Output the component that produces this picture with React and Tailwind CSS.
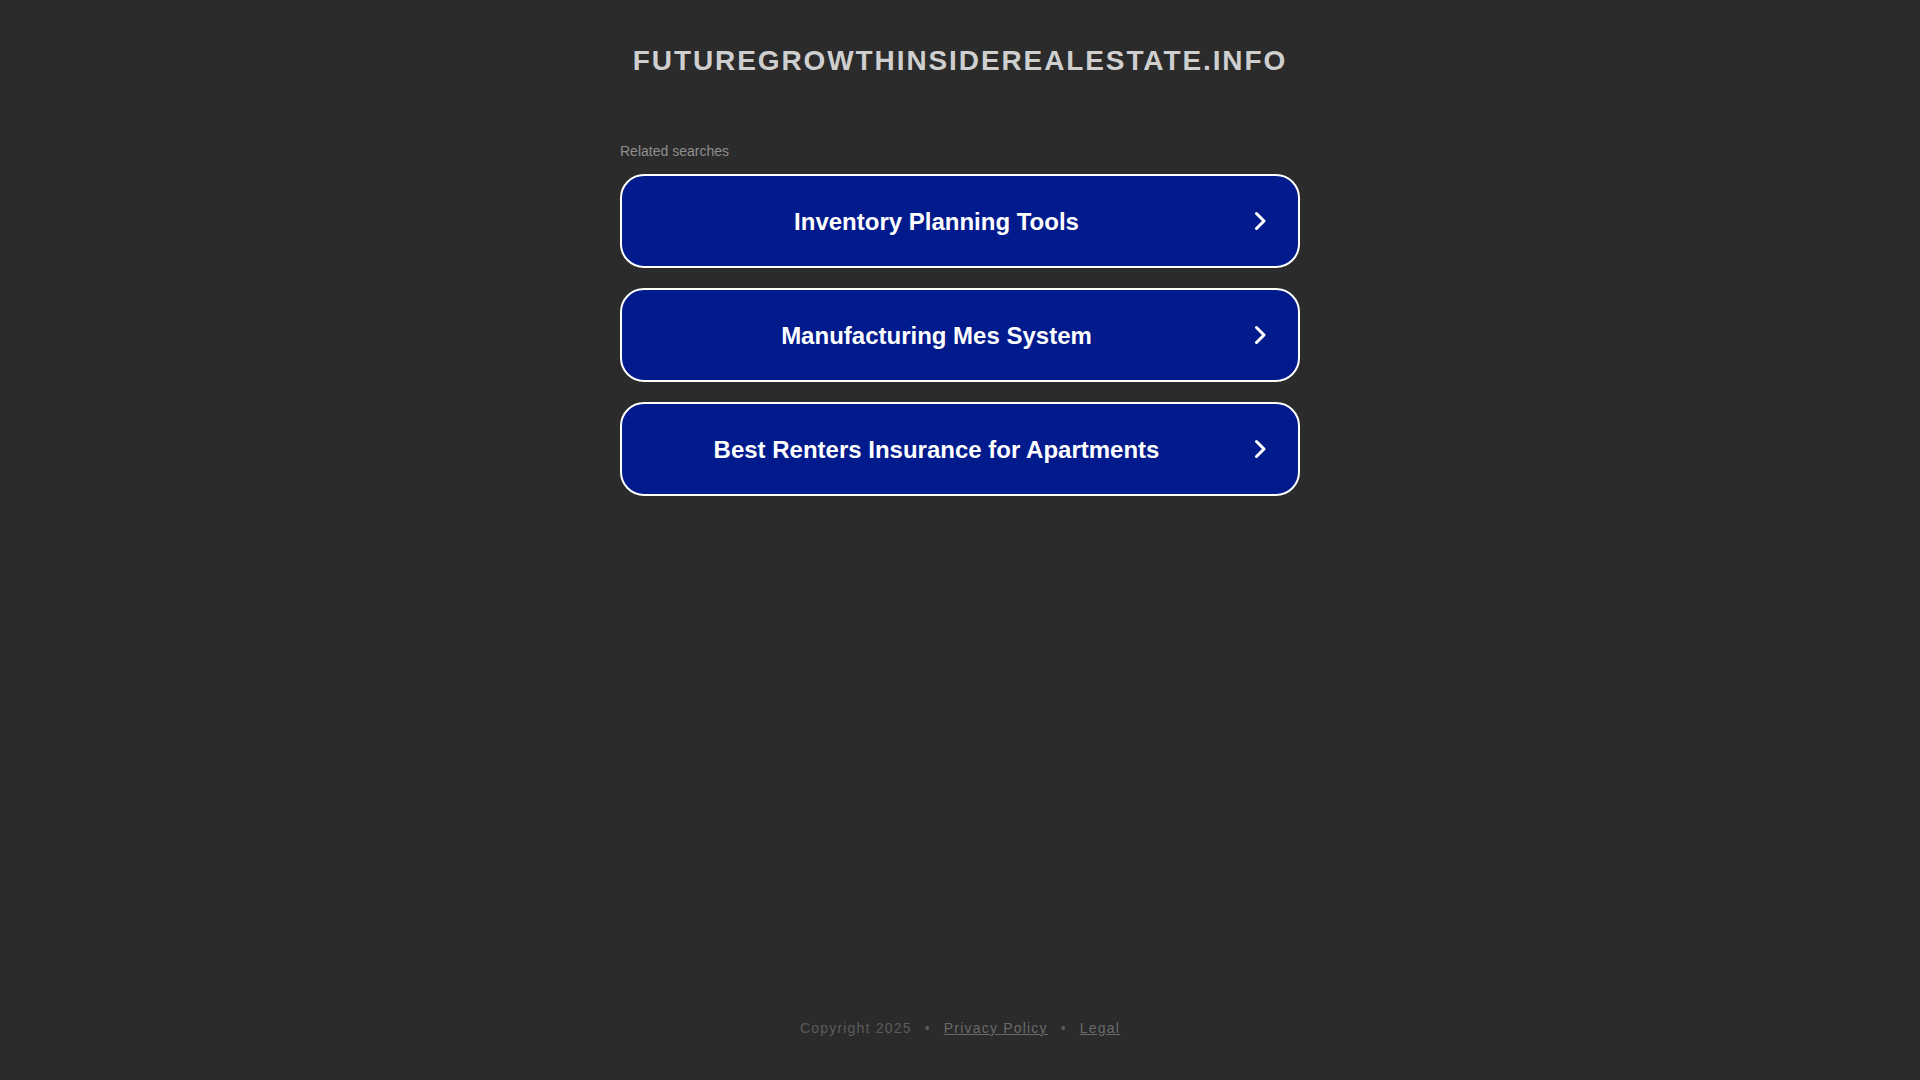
export default function App() {
  const items = [
    "Inventory Planning Tools",
    "Manufacturing Mes System",
    "Best Renters Insurance for Apartments",
  ];
  const font = { fontFamily: '"Liberation Sans", Arial, sans-serif' };
  return (
    <div
      className="min-h-screen w-full bg-[#2b2b2b] flex flex-col items-center"
      style={font}
    >
      <h1 className="pt-[45px] text-[28px] leading-[32px] font-bold tracking-[1.9px] text-[#cfcfcf] uppercase">
        futuregrowthinsiderealestate.info
      </h1>
      <div className="mt-[66px] w-[680px] flex flex-col">
        <div className="text-[14px] leading-[16px] text-[#8f8f8f] mb-[15px]">
          Related searches
        </div>
        <div className="flex flex-col gap-[20px]">
          {items.map((t) => (
            <a
              key={t}
              href="#"
              className="flex items-center h-[94px] w-full rounded-[24px] border-2 border-white bg-[#011a8c] text-white"
            >
              <span className="flex-1 pl-[3px] pt-[2px] text-center text-[24px] leading-[28px] font-bold">
                {t}
              </span>
              <svg
                width="12"
                height="20"
                viewBox="0 0 12 20"
                className="ml-[6px] mr-[32px] shrink-0"
              >
                <polyline
                  points="2.5,2.5 10,10 2.5,17.5"
                  fill="none"
                  stroke="white"
                  strokeWidth="3"
                  strokeLinecap="round"
                  strokeLinejoin="round"
                />
              </svg>
            </a>
          ))}
        </div>
      </div>
      <footer className="mt-auto pb-[44px] flex items-center text-[14px] leading-[16px] tracking-[1.2px] text-[#5c5c5c]">
        <span>Copyright 2025</span>
        <span className="mx-[13px]">•</span>
        <a href="#" className="underline text-[#6a6a6a]">
          Privacy Policy
        </a>
        <span className="mx-[13px]">•</span>
        <a href="#" className="underline text-[#6a6a6a]">
          Legal
        </a>
      </footer>
    </div>
  );
}
